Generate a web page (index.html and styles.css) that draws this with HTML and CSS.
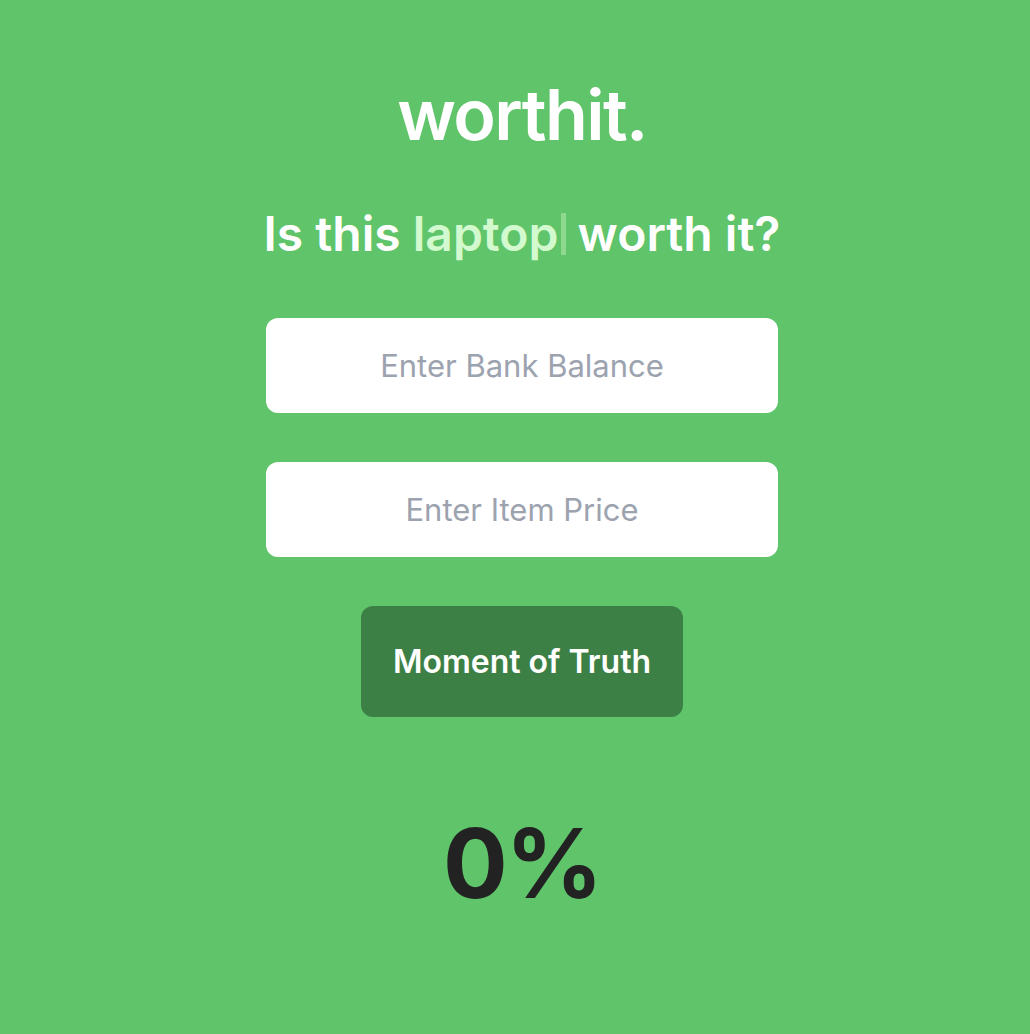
FILE: index.html
```html
<!DOCTYPE html>
<html lang="en">
<head>
<meta charset="utf-8">
<title>worthit.</title>
<link rel="stylesheet" href="styles.css">
</head>
<body>
<main class="app">
  <h1 class="logo">worthit.</h1>
  <h2 class="question">Is this <span class="item">laptop</span><span class="cursor"></span> worth it?</h2>
  <form class="form">
    <input class="field" type="text" placeholder="Enter Bank Balance">
    <input class="field" type="text" placeholder="Enter Item Price">
    <button class="btn" type="button">Moment of Truth</button>
  </form>
  <div class="result">0%</div>
</main>
</body>
</html>
```
FILE: styles.css
```css
html, body {
  margin: 0;
  padding: 0;
}
body {
  background: #5fc46a;
  font-family: Inter, "Open Sans", sans-serif;
  min-height: 1034px;
}
.app {
  display: flex;
  flex-direction: column;
  align-items: center;
  padding-top: 70px;
  padding-left: 14px;
}
.logo {
  margin: 0;
  color: #fff;
  font-size: 70px;
  font-weight: 600;
  letter-spacing: -1.6px;
  line-height: 90px;
}
.question {
  margin: 44px 0 0;
  color: #fff;
  font-size: 48px;
  font-weight: 600;
  letter-spacing: 0;
  line-height: 60px;
  display: flex;
  align-items: center;
  white-space: pre;
}
.item {
  color: #d3f9cf;
}
.cursor {
  display: inline-block;
  width: 5px;
  height: 42px;
  background: #8fd98f;
  margin-left: 2px;
}
.form {
  display: flex;
  flex-direction: column;
  align-items: center;
  gap: 49px;
  margin-top: 54px;
}
.field {
  box-sizing: border-box;
  width: 512px;
  height: 95px;
  border: none;
  border-radius: 12px;
  background: #fff;
  font-family: inherit;
  font-size: 31px;
  text-align: center;
  outline: none;
  color: #374151;
}
.field::placeholder {
  color: #9ca3af;
}
.btn {
  box-sizing: border-box;
  width: 322px;
  height: 111px;
  border: none;
  border-radius: 12px;
  background: #3d8046;
  color: #fff;
  font-family: inherit;
  font-size: 32px;
  font-weight: 600;
}
.result {
  margin-top: 96px;
  color: #222222;
  font-size: 96px;
  font-weight: 700;
  letter-spacing: -2px;
  line-height: 100px;
}
```
